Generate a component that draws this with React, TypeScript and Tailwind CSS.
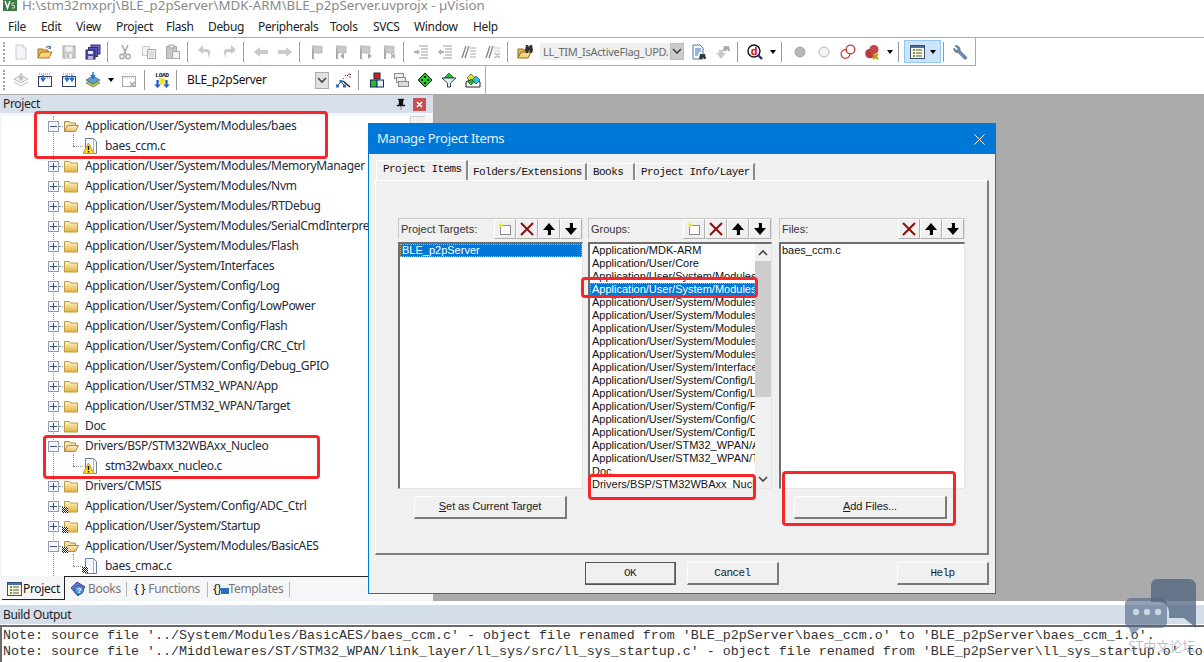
import React from "react";

type P = { children?: React.ReactNode; s?: number };
const Svg = ({ children, s = 16 }: P) => (
  <svg width={s} height={s} viewBox="0 0 16 16" className="block shrink-0">{children}</svg>
);

const G1 = "#c9c9c9";
const G2 = "#a9a9a9";

const NewFile = () => (<Svg><path d="M3 1h7l3 3v11H3z" fill="#f3f5fa" stroke="#c8ccd6" /><path d="M10 1v3h3" fill="#fff" stroke="#c8ccd6" /></Svg>);
const OpenF = () => (<Svg><path d="M1 14V5h5l1 1h4v2" fill="#e8b850" stroke="#a5772a" /><path d="M1 14l3-6h11l-3 6z" fill="#f7d67c" stroke="#a5772a" /><path d="M9 4c1-2 3-2 4-1" fill="none" stroke="#5b7fa8" strokeWidth="1.3" /><path d="M14 1v4h-3z" fill="#5b7fa8" /></Svg>);
const SaveD = () => (<Svg><rect x="2" y="2" width="12" height="12" fill={G1} stroke={G2} /><rect x="4.5" y="2.5" width="7" height="5" fill="#f2f2f2" /><rect x="5" y="10" width="6" height="4" fill="#eee" /><rect x="6" y="10.5" width="2" height="3" fill={G2} /></Svg>);
const SaveAll = () => (<Svg><rect x="6" y="1" width="9" height="9" fill="#6f6cc0" stroke="#2e2a78" /><rect x="3.5" y="3.5" width="9" height="9" fill="#5c58b2" stroke="#2e2a78" /><rect x="1" y="6" width="9" height="9" fill="#4d49a5" stroke="#2e2a78" /><rect x="3" y="7" width="5" height="3" fill="#e8e8f6" /><rect x="3" y="12" width="5" height="3" fill="#b9b8dc" /></Svg>);
const Cut = () => (<Svg><path d="M5 1l4 9M11 1l-4 9" stroke={G2} strokeWidth="1.6" fill="none" /><circle cx="5" cy="12.5" r="2.2" fill="none" stroke={G2} strokeWidth="1.4" /><circle cx="11" cy="12.5" r="2.2" fill="none" stroke={G2} strokeWidth="1.4" /></Svg>);
const Copy = () => (<Svg><path d="M1.5 2.5h7v9h-7z" fill="#f4f4f4" stroke={G1} /><path d="M6.5 5.5h8v9h-8z" fill="#eee" stroke={G2} /><path d="M8 8h5M8 10h5M8 12h5" stroke={G1} /></Svg>);
const Paste = () => (<Svg><rect x="1.5" y="2.5" width="10" height="12" fill={G1} stroke={G2} /><rect x="4" y="1" width="5" height="3" fill="#e6e6e6" stroke={G2} /><path d="M7.5 7.5h7v7h-7z" fill="#f2f2f2" stroke={G2} /></Svg>);
const Undo = ({ flip }: { flip?: boolean }) => (<Svg><g transform={flip ? "translate(16,0) scale(-1,1)" : undefined}><path d="M5 5h5c3 0 3.5 3 3 5l-2 4c0-3 1-6-2-6H5z" fill={G1} /><path d="M6 1v9L1 6z" fill={G1} /></g></Svg>);
const Arrow = ({ flip }: { flip?: boolean }) => (<Svg><g transform={flip ? "translate(16,0) scale(-1,1)" : undefined}><path d="M1 8l6-5v3h8v4H7v3z" fill={G1} /></g></Svg>);
const Flag = ({ mark }: { mark?: string }) => (<Svg><path d="M3 15V2h2v13z" fill={G2} /><path d="M3 2c3-1 5 1 10 0v7c-4 1-6-1-8 0z" fill={G1} stroke={G2} strokeWidth=".6" />{mark === "l" && <path d="M7 12l4-3v6z" fill={G2} />}{mark === "r" && <path d="M15 12l-4-3v6z" fill={G2} />}{mark === "x" && <path d="M10 10l4 4m0-4l-4 4" stroke={G2} strokeWidth="1.5" />}</Svg>);
const Indent = ({ dir }: { dir: number }) => (<Svg><path d="M6 2h9M8 5h7M8 8h7M8 11h7M6 14h9" stroke="#9a9a9a" /><path d={dir > 0 ? "M1 7h3V5l3 3-3 3V9H1z" : "M7 7H4V5L1 8l3 3V9h3z"} fill="#9db0c4" /></Svg>);
const Comment = ({ x }: { x?: boolean }) => (<Svg><path d="M1 14L5 2M4 14L8 2" stroke="#8a8a8a" strokeWidth="1.4" /><path d="M9 4h6M9 7h6M9 10h6M9 13h6" stroke={x ? G1 : "#aaa"} />{x && <path d="M10 9l5 5m0-5l-5 5" stroke={G2} />}</Svg>);
const Binoc = () => (<Svg><path d="M1 14V5h5l1 1h4v2" fill="#e8b850" stroke="#8a6a24" /><path d="M1 14l3-6h10l-3 6z" fill="#f7d67c" stroke="#8a6a24" /><path d="M8 6l1-5h2l1 2 1-2h2l1 5-1 3h-2l-1-3-1 3H9z" fill="#333" /></Svg>);
const FindDoc = () => (<Svg><path d="M2 1h7l3 3v11H2z" fill="#fff" stroke="#4a74b4" /><path d="M4 5h6M4 7h6M4 9h4M4 11h3" stroke="#2d6cc0" /><path d="M8 15l1-5h2l.5 1 .5-1h2l1 5h-2l-1-2-1 2z" fill="#333" /></Svg>);
const FindD = () => (<Svg><path d="M1 9h3V6h4v3h3l-5 6z" fill={G1} /><path d="M8 7l1-5h2l.5 1 .5-1h2l1 5h-2l-1-2-1 2z" fill={G2} /></Svg>);
const DebugD = () => (<Svg><circle cx="7" cy="7" r="6" fill="#fff" stroke="#111" strokeWidth="1.4" /><text x="7" y="11" textAnchor="middle" fontSize="11" fontWeight="700" fontFamily="Liberation Sans" fill="#e00000">d</text><path d="M11 11l4 4" stroke="#1c2f80" strokeWidth="2.4" /></Svg>);
const Circle = ({ f, st }: { f: string; st: string }) => (<Svg><circle cx="8" cy="8" r="5" fill={f} stroke={st} /></Svg>);
const TwoC = () => (<Svg><circle cx="5.5" cy="10" r="4.3" fill="#fff" stroke="#c8342c" strokeWidth="1.3" /><circle cx="10.5" cy="5.5" r="4.3" fill="#fff" stroke="#c8342c" strokeWidth="1.3" /></Svg>);
const RedX = () => (<Svg><circle cx="6" cy="9.5" r="4.8" fill="#b83a3a" /><circle cx="10" cy="5.5" r="4.5" fill="#c24444" /><path d="M9 10l5 5m0-5l-5 5" stroke="#b59a1a" strokeWidth="2.2" /></Svg>);
const WinIcon = () => (<Svg><rect x=".5" y="1.5" width="14" height="13" fill="#fbf8dc" stroke="#3d4d70" /><rect x="1" y="2" width="13" height="2" fill="#4d6fa5" /><path d="M3 6h2M3 9h2M3 12h2" stroke="#3a7a2a" strokeWidth="1.4" /><path d="M6 6h6M6 9h6M6 12h6" stroke="#555" /></Svg>);
const Wrench = () => (<Svg><path d="M2 2l3 2v2l-2 .5L1 4c-.5 3 1.5 5 4 4.500l6.500 6.500c1 1 3-1 2-2L7 6.500C7.500 3.500 5 1 2 2z" fill="#6f8fb4" stroke="#3e5a7c" strokeWidth=".7" /></Svg>);
const Grid = ({ arrows, x }: { arrows: number; x?: boolean }) => (<Svg><rect x="1.500" y="4.500" width="13" height="10" fill="#fff" stroke={x ? G2 : "#333f66"} /><path d="M2 2h12M2 6h12" stroke={x ? G1 : "#6d7ea8"} strokeDasharray="1 1" />{arrows >= 1 && !x && <path d="M6 3v5M4 6l2 3 2-3" stroke="#1f6fd0" strokeWidth="1.4" fill="none" />}{arrows === 2 && <path d="M11 3v5M9 6l2 3 2-3" stroke="#1f6fd0" strokeWidth="1.4" fill="none" />}{x && <path d="M9 10l5 5m0-5l-5 5" stroke={G2} strokeWidth="1.4" />}</Svg>);
const Translate = () => (<Svg><path d="M1 7l7-4 7 4-7 4z" fill="#eee" stroke="#bbb" /><path d="M1 10l7 4 7-4" fill="none" stroke="#bbb" /><path d="M8 1v6M6 5l2 3 2-3" stroke="#bbb" fill="none" strokeWidth="1.4" /></Svg>);
const Batch = () => (<Svg><path d="M1 11l7 4 7-4-7-4z" fill="#b7c94a" stroke="#556" strokeWidth=".6" /><path d="M1 8l7 4 7-4-7-4z" fill="#62a0c8" stroke="#345" strokeWidth=".6" /><path d="M8 0v5M6 3l2 3 2-3" stroke="#1f6fd0" strokeWidth="1.4" fill="none" /></Svg>);
const Load = () => (<Svg s={18}><text x="8" y="5" textAnchor="middle" fontSize="5.500" fontWeight="700" fontFamily="Liberation Mono" fill="#111">LOAD</text><path d="M8 5l1 2 2-1-1 2 2 1-2 1 1 2-2-1-1 2-1-2-2 1 1-2-2-1 2-1-1-2 2 1z" fill="#f4e21c" /><path d="M3 8v4H1l3 3 3-3H5V8zM11 8v4H9l3 3 3-3h-2V8z" fill="#1e5fd0" /></Svg>);
const Wizard = () => (<Svg><path d="M7 9l7 6" stroke="#222" strokeWidth="1.500" /><path d="M5 10L2 13M5 10l3 3" stroke="#356ab8" /><rect x="3.500" y="8" width="3" height="3" fill="#356ab8" /><rect x="0" y="12.500" width="3" height="3" fill="#356ab8" /><rect x="7" y="12.500" width="3" height="3" fill="#356ab8" /><path d="M9 3l1 1M13 1v2M15 5h-2M7 6l1 1" stroke="#c03030" /><path d="M11 3l1 1M15 2l-1 1" stroke="#222" /></Svg>);
const Blocks = () => (<Svg><rect x="5" y="1" width="6" height="6" fill="#d41f1f" stroke="#1d2b5c" /><rect x="1.500" y="8" width="6.500" height="7" fill="#19c02a" stroke="#1d2b5c" /><rect x="8" y="8" width="6.500" height="7" fill="#e6ecf5" stroke="#1d2b5c" /></Svg>);
const Windows = () => (<Svg><rect x="1.500" y="1.500" width="9" height="5" fill="#eee" stroke="#888" /><rect x="3.500" y="5.500" width="9" height="5" fill="#eee" stroke="#888" /><rect x="5.500" y="9.500" width="10" height="5" fill="#ddd" stroke="#888" /></Svg>);
const Diamond = () => (<Svg><path d="M8 1l7 7-7 7-7-7z" fill="#1fd11f" stroke="#111" /><g fill="#111"><rect x="7" y="4" width="2" height="2" /><rect x="4" y="7" width="2" height="2" /><rect x="10" y="7" width="2" height="2" /><rect x="7" y="10" width="2" height="2" /></g></Svg>);
const Funnel = () => (<Svg><path d="M8 1l5 5H3z" fill="#19c02a" stroke="#222" strokeWidth=".6" /><path d="M1 6h14L9.500 11v4h-3v-4z" fill="#d9f3f7" stroke="#444" /></Svg>);
const Multi = () => (<Svg><path d="M1 10l7-4 7 4v5H1z" fill="#fff" stroke="#222" /><path d="M6 2l4 4-4 4-4-4z" fill="#e8e020" stroke="#222" strokeWidth=".6" /><path d="M11 4l4 4-4 4-4-4z" fill="#20c8e0" stroke="#222" strokeWidth=".6" /><path d="M6 7l3 3-3 3-3-3z" fill="#20c020" stroke="#222" strokeWidth=".6" /></Svg>);

const Btn = ({ children }: { children: React.ReactNode }) => (
  <div className="w-6 h-full flex items-center justify-center shrink-0">{children}</div>
);
const Sep = () => (
  <div className="w-2 h-full flex shrink-0 items-center pl-[2px]"><div className="w-px h-5 bg-[#9a9a9a]" /></div>
);
const Caret = () => (
  <div className="w-[12px] h-full flex items-center justify-center shrink-0"><div className="w-0 h-0 border-x-[3.5px] border-x-transparent border-t-[4px] border-t-black" /></div>
);
const Grip = () => (
  <div className="w-[9px] h-full shrink-0 flex items-center pl-[3px]"><div className="w-[2px] h-[20px] border-l-2 border-dotted border-[#a0a0a0]" /></div>
);
const Chevron = ({ up }: { up?: boolean }) => (
  <svg width="10" height="7" viewBox="0 0 10 7" className="block"><path d={up ? "M1 6l4-4 4 4" : "M1 1l4 4 4-4"} fill="none" stroke="#444" strokeWidth="1.6" /></svg>
);

const menu: [string, number][] = [["File", 33], ["Edit", 35], ["View", 40], ["Project", 50], ["Flash", 42], ["Debug", 50], ["Peripherals", 72], ["Tools", 43], ["SVCS", 41], ["Window", 59], ["Help", 30]];

const Minus = ({ plus }: { plus?: boolean }) => (
  <div className="w-[11px] h-[11px] border border-[#8f9db0] bg-[#f4f6f9] flex items-center justify-center relative shrink-0">
    <div className="w-[7px] h-px bg-[#3c5070]" />
    {plus && <div className="absolute w-px h-[7px] bg-[#3c5070]" />}
  </div>
);
const Lock = () => (
  <svg width="6" height="6" viewBox="0 0 6 6" className="absolute -left-px bottom-px"><path d="M0 0h6v6H0z" fill="#fff" /><path d="M0 0h1v1H0zM2 0h1v1H2zM4 0h1v1H4zM1 1h1v1H1zM3 1h1v1H3zM5 1h1v1H5zM0 2h1v1H0zM2 2h1v1H2zM4 2h1v1H4zM1 3h1v1H1zM3 3h1v1H3zM5 3h1v1H5zM0 4h1v1H0zM2 4h1v1H2zM4 4h1v1H4zM1 5h1v1H1zM3 5h1v1H3zM5 5h1v1H5z" fill="#111" /></svg>
);
const FolderIcon = ({ open, lock }: { open?: boolean; lock?: boolean }) => (
  <div className="relative w-[16px] h-[16px] shrink-0">
    <svg width="16" height="16" viewBox="0 0 16 16" className="block">
      <defs>
        <linearGradient id="fg" x1="0" y1="0" x2="0" y2="1"><stop offset="0" stopColor="#fff6cc" /><stop offset="1" stopColor="#e3b23a" /></linearGradient>
        <linearGradient id="fo" x1="0" y1="0" x2="0" y2="1"><stop offset="0" stopColor="#fbedc4" /><stop offset="1" stopColor="#e8bf66" /></linearGradient>
      </defs>
      {open ? (
        <>
          <path d="M1.500 13.500v-10h5l1 1.500h5v2" fill="#f4e3b2" stroke="#b08a48" />
          <path d="M1.500 13.500l3-6h11l-3 6z" fill="url(#fo)" stroke="#b08a48" />
        </>
      ) : (
        <>
          <path d="M1.500 3.500h5l1 1.500h7v9h-13z" fill="url(#fg)" stroke="#c09a44" />
        </>
      )}
    </svg>
    {lock && <Lock />}
  </div>
);
const FileIcon = ({ warn, lock }: { warn?: boolean; lock?: boolean }) => (
  <div className="relative w-[16px] h-[16px] shrink-0">
    <svg width="16" height="16" viewBox="0 0 16 16" className="block">
      <path d="M2.500 .5h8l3 3v12h-11z" fill="#f4f7fc" stroke="#6f7f9c" />
      <path d="M10.500 1v14" stroke="#a6b6d4" />
      {warn && (
        <>
          <path d="M5.500 5L11 15.500H0z" fill="#fbd82a" stroke="#c8a010" />
          <path d="M5.500 8v4M5.500 13v1.500" stroke="#111" strokeWidth="1.400" />
        </>
      )}
    </svg>
    {lock && <Lock />}
  </div>
);

type Row = { t: string; k: "c" | "o" | "f"; warn?: boolean; lock?: boolean };
const U = "Application/User/";
const tree: Row[] = [
  { t: U + "System/Modules/baes", k: "o" },
  { t: "baes_ccm.c", k: "f", warn: true },
  { t: U + "System/Modules/MemoryManager", k: "c" },
  { t: U + "System/Modules/Nvm", k: "c" },
  { t: U + "System/Modules/RTDebug", k: "c" },
  { t: U + "System/Modules/SerialCmdInterpreter", k: "c" },
  { t: U + "System/Modules/Flash", k: "c" },
  { t: U + "System/Interfaces", k: "c" },
  { t: U + "System/Config/Log", k: "c" },
  { t: U + "System/Config/LowPower", k: "c" },
  { t: U + "System/Config/Flash", k: "c" },
  { t: U + "System/Config/CRC_Ctrl", k: "c" },
  { t: U + "System/Config/Debug_GPIO", k: "c" },
  { t: U + "STM32_WPAN/App", k: "c" },
  { t: U + "STM32_WPAN/Target", k: "c" },
  { t: "Doc", k: "c" },
  { t: "Drivers/BSP/STM32WBAxx_Nucleo", k: "o" },
  { t: "stm32wbaxx_nucleo.c", k: "f", warn: true },
  { t: "Drivers/CMSIS", k: "c" },
  { t: U + "System/Config/ADC_Ctrl", k: "c", lock: true },
  { t: U + "System/Startup", k: "c", lock: true },
  { t: U + "System/Modules/BasicAES", k: "o", lock: true },
  { t: "baes_cmac.c", k: "f", lock: true },
];

const TreeRow = ({ r }: { r: Row }) =>
  r.k === "f" ? (
    <div className="h-5 flex items-center relative">
      <div className="absolute left-[73px] top-[-2px] h-3 border-l border-dotted border-[#909090]" />
      <div className="w-[73px] shrink-0" />
      <div className="w-[10px] border-t border-dotted border-[#909090] shrink-0" />
      <FileIcon warn={r.warn} lock={r.lock} />
      <span className="ml-[6px]">{r.t}</span>
    </div>
  ) : (
    <div className="h-5 flex items-center">
      <div className="w-[48px] shrink-0" />
      <Minus plus={r.k === "c"} />
      <div className="w-[4px] border-t border-dotted border-[#909090] shrink-0" />
      <FolderIcon open={r.k === "o"} lock={r.lock} />
      <span className="ml-[6px] whitespace-nowrap">{r.t}</span>
    </div>
  );

const StarNew = () => (
  <svg width="16" height="16" viewBox="0 0 16 16" className="block"><rect x="3.500" y="4.500" width="10" height="9" fill="#fff" stroke="#222" strokeDasharray="1 1" /><path d="M4 1l1 2 2 1-2 1-1 2-1-2-2-1 2-1z" fill="#f2e83a" /></svg>
);
const RedCross = () => (
  <svg width="16" height="16" viewBox="0 0 16 16" className="block"><path d="M2 2l12 12M14 2L2 14" stroke="#8a0f0f" strokeWidth="2" /></svg>
);
const UpA = ({ down }: { down?: boolean }) => (
  <svg width="14" height="14" viewBox="0 0 14 14" className="block"><g transform={down ? "translate(0,14) scale(1,-1)" : undefined}><path d="M7 1l6 7H9v5H5.500c1-2 .5-3.500 0-5H1z" fill="#000" /></g></svg>
);
const Cell = ({ children }: { children: React.ReactNode }) => (
  <div className="w-[22px] h-full flex items-center justify-center border-t border-l border-white border-r border-r-[#b0b0b0] border-b border-b-[#b0b0b0] bg-[#f0f0f0] shrink-0">{children}</div>
);
const Bevel = ({ w, children, extra }: { w: string; children: React.ReactNode; extra?: string }) => (
  <div className={`${w} ${extra ?? ""} h-[23px] flex items-center justify-center bg-[#f0f0f0] border-t border-l border-t-[#fdfdfd] border-l-[#fdfdfd] border-r-2 border-b-2 border-r-[#7a7a7a] border-b-[#7a7a7a] text-[#1a1a1a] shrink-0`}>{children}</div>
);

const ColHead = ({ label, add }: { label: string; add?: boolean }) => (
  <div className="h-[21px] flex items-center border-t border-l border-[#c8c8c8] border-r border-r-[#e0e0e0] pl-[2px]">
    <span className="flex-1 text-[#333] whitespace-nowrap">{label}</span>
    {add && <Cell><StarNew /></Cell>}
    <Cell><RedCross /></Cell>
    <Cell><UpA /></Cell>
    <Cell><UpA down /></Cell>
  </div>
);
const listBox = "h-[247px] mt-[3px] bg-white border-t-2 border-l-2 border-t-[#6e6e6e] border-l-[#6e6e6e] border-r border-b border-r-[#e4e4e4] border-b-[#e4e4e4] overflow-hidden";

const M = U + "System/Modules";
const C = U + "System/Config/";
const groups = [
  "Application/MDK-ARM", U + "Core", M, M, M, M, M, M, M, U + "System/Interfaces", C + "Log", C + "LowPower", C + "Flash", C + "CRC_Ctrl", C + "Debug_GPIO", U + "STM32_WPAN/App", U + "STM32_WPAN/Target", "Doc", "Drivers/BSP/STM32WBAxx_Nucleo",
];

const Anno = ({ c }: { c: string }) => (
  <div className={`absolute border-[3px] border-[#f8262a] rounded-[4px] pointer-events-none ${c}`} />
);

const mono = "font-['Liberation_Mono',monospace] text-[11px] tracking-[-0.55px]";

function Dialog() {
  return (
    <div className="absolute left-[368px] top-[123px] w-[628px] h-[471px] border border-[#0078d7] bg-[#f0f0f0] flex flex-col">
      <div className="h-[30px] bg-[#0078d7] flex items-center justify-between pl-[8px] pr-[10px] shrink-0">
        <span className="font-['Noto_Sans',sans-serif] text-[13px] text-[#e6f1fa]">Manage Project Items</span>
        <svg width="11" height="11" viewBox="0 0 11 11" className="block"><path d="M.5.5l10 10m0-10l-10 10" stroke="#fff" /></svg>
      </div>
      <div className="flex flex-col px-[6px] pt-[6px] font-['Liberation_Sans',sans-serif] text-[11px] tracking-normal">
        <div className={`flex items-end h-[20px] pl-px ${mono}`}>
          <div className="w-[92px] h-[20px] pb-[2px] pl-[6px] flex items-center border-t border-l border-white border-r-2 border-r-[#8a8a8a] bg-[#f0f0f0] text-[#111]">Project Items</div>
          <div className="w-[119px] h-[17px] flex items-center pl-[4px] border-t border-l border-white border-r-2 border-r-[#8a8a8a] text-[#111]">Folders/Extensions</div>
          <div className="w-[48px] h-[17px] flex items-center pl-[5px] border-t border-l border-white border-r-2 border-r-[#8a8a8a] text-[#111]">Books</div>
          <div className="w-[120px] h-[17px] flex items-center pl-[5px] border-t border-l border-white border-r-2 border-r-[#8a8a8a] text-[#111]">Project Info/Layer</div>
        </div>
        <div className="h-[375px] border-t border-l border-white border-r-2 border-b-2 border-r-[#7f7f7f] border-b-[#7f7f7f] pt-[37px] pl-[22px] flex items-start">
          <div className="w-[185px] flex flex-col">
            <ColHead label="Project Targets:" add />
            <div className={listBox}>
              <div className="h-[13px] bg-[#0078d7] text-white pl-[1px] leading-[11px] border border-dotted border-[#d8a868]">BLE_p2pServer</div>
            </div>
            <Bevel w="w-[153px]" extra="mt-[7px] ml-[16px]"><span className="-mt-px tracking-[-0.1px]"><u>S</u>et as Current Target</span></Bevel>
          </div>
          <div className="w-[184px] ml-[5px] flex flex-col">
            <ColHead label="Groups:" add />
            <div className={`${listBox} flex`}>
              <div className="flex-1 min-w-0 overflow-hidden">
                {groups.map((g, i) => (
                  <div key={i} className={i === 3 ? "h-[13px] leading-[11px] pl-px whitespace-nowrap overflow-hidden bg-[#0078d7] text-white border border-dotted border-[#d8a868]" : "h-[13px] leading-[13px] pl-[2px] whitespace-nowrap overflow-hidden text-[#111]"}>{g}</div>
                ))}
              </div>
              <div className="w-[16px] shrink-0 flex flex-col bg-[#f0f0f0]">
                <div className="h-[17px] flex items-center justify-center"><Chevron up /></div>
                <div className="h-[136px] bg-[#cdcdcd]" />
                <div className="flex-1" />
                <div className="h-[17px] flex items-center justify-center"><Chevron /></div>
              </div>
            </div>
          </div>
          <div className="w-[186px] ml-[7px] flex flex-col">
            <ColHead label="Files:" />
            <div className={listBox}>
              <div className="h-[13px] leading-[13px] pl-[1px] text-[#111]">baes_ccm.c</div>
            </div>
            <Bevel w="w-[153px]" extra="mt-[7px] ml-[15px]"><span className="-mt-px tracking-[-0.1px]"><u>A</u>dd Files...</span></Bevel>
          </div>
        </div>
        <div className={`flex mt-[7px] pl-[210px] ${mono}`}>
          <Bevel w="w-[91px]" extra="outline outline-1 outline-[#555] -outline-offset-1">OK</Bevel>
          <Bevel w="w-[92px]" extra="ml-[11px]">Cancel</Bevel>
          <Bevel w="w-[92px]" extra="ml-[118px]">Help</Bevel>
        </div>
      </div>
    </div>
  );
}

const Watermark = () => (
  <div className="absolute left-[1122px] top-[576px] w-[80px] h-[86px] pointer-events-none">
    <svg width="80" height="62" viewBox="0 0 80 62" className="block">
      <path d="M35 3h32c4 0 7 3 7 7v42l-12-10H47v-6c0-6-5-10-10-10H29V10c0-4 3-7 6-7z" fill="#4a5f7c" fillOpacity=".72" />
      <path d="M9 22h30c3 0 6 3 6 6v18c0 3-3 6-6 6H18l-8 8-3-8c-2 0-4-3-4-6V28c0-3 3-6 6-6z" fill="#4e6685" fillOpacity=".62" />
      <circle cx="14" cy="36" r="3.200" fill="#fff" fillOpacity=".6" />
      <circle cx="25" cy="36" r="3.200" fill="#fff" fillOpacity=".6" />
      <circle cx="36" cy="36" r="3.200" fill="#fff" fillOpacity=".6" />
    </svg>
    <div className="font-['Noto_Sans_CJK_SC',sans-serif] text-[13px] tracking-normal leading-[16px] text-[#8a94a4]/60 pl-[6px] whitespace-nowrap">ST中文论坛</div>
  </div>
);

export default function App() {
  return (
    <div className="relative w-[1204px] h-[662px] overflow-hidden bg-white flex flex-col font-['Noto_Sans',sans-serif] text-[12px] tracking-[-0.33px] text-[#1a1a1a]">
      <div className="h-[17px] flex items-start pl-[3px] overflow-hidden shrink-0">
        <svg width="14" height="11" viewBox="0 0 14 11" className="block shrink-0"><rect width="14" height="11" fill="#3a7d44" /><path d="M2 1l2.500 7L7 1" fill="none" stroke="#fff" strokeWidth="1.500" /><path d="M11.500 3H9v2.500h2.500V8H9" fill="none" stroke="#cfd8d0" /></svg>
        <span className="ml-[5px] text-[13.3px] tracking-normal leading-[10px] text-[#8a8a8a] whitespace-nowrap">H:\stm32mxprj\BLE_p2pServer\MDK-ARM\BLE_p2pServer.uvprojx - µVision</span>
      </div>
      <div className="h-[21px] flex items-center pl-[8px] border-b border-[#ababab] shrink-0">
        {menu.map(([m, w]) => (
          <span key={m} style={{ width: w }} className="shrink-0 text-[#222]">{m}</span>
        ))}
      </div>
      <div className="h-[28px] w-[976px] flex items-center border-b border-r border-[#ababab] shrink-0">
        <Grip />
        <Btn><NewFile /></Btn><Btn><OpenF /></Btn><Btn><SaveD /></Btn><Btn><SaveAll /></Btn>
        <Sep />
        <Btn><Cut /></Btn><Btn><Copy /></Btn><Btn><Paste /></Btn>
        <Sep />
        <Btn><Undo /></Btn><Btn><Undo flip /></Btn>
        <Sep />
        <Btn><Arrow /></Btn><Btn><Arrow flip /></Btn>
        <Sep />
        <Btn><Flag /></Btn><Btn><Flag mark="l" /></Btn><Btn><Flag mark="r" /></Btn><Btn><Flag mark="x" /></Btn>
        <Sep />
        <Btn><Indent dir={1} /></Btn><Btn><Indent dir={-1} /></Btn><Btn><Comment /></Btn><Btn><Comment x /></Btn>
        <Sep />
        <Btn><Binoc /></Btn>
        <div className="ml-[3px] w-[144px] h-[17px] flex shrink-0 bg-[#f0f0f0]">
          <span className="w-[130px] pl-[3px] text-[11px] tracking-[-0.3px] leading-[17px] text-[#6a6a6a] whitespace-nowrap">LL_TIM_IsActiveFlag_UPD.</span>
          <div className="w-[14px] bg-[#cccccc] border border-[#bdbdbd] flex items-center justify-center"><Chevron /></div>
        </div>
        <div className="ml-[3px] flex h-full"><Btn><FindDoc /></Btn><Btn><FindD /></Btn></div>
        <Sep />
        <Btn><DebugD /></Btn><Caret />
        <Sep />
        <div className="ml-px flex h-full">
          <Btn><Circle f="#b8b8b8" st="#a8a8a8" /></Btn><Btn><Circle f="#f4f4f4" st="#b5b5b5" /></Btn><Btn><TwoC /></Btn><Btn><RedX /></Btn>
        </div>
        <Caret />
        <Sep />
        <div className="w-[37px] h-[23px] flex items-center pl-[5px] gap-[4px] bg-[#cce4f7] border border-[#90c8f6] shrink-0">
          <WinIcon />
          <div className="w-0 h-0 border-x-[3.5px] border-x-transparent border-t-[4px] border-t-black" />
        </div>
        <Sep />
        <Btn><Wrench /></Btn>
      </div>
      <div className="h-[28px] w-[486px] flex items-center border-r border-[#ababab] shrink-0">
        <Grip />
        <Btn><Translate /></Btn><Btn><Grid arrows={1} /></Btn><Btn><Grid arrows={2} /></Btn><Btn><Batch /></Btn><Caret />
        <Btn><Grid arrows={0} x /></Btn>
        <div className="ml-px flex h-full"><Sep /></div>
        <Btn><Load /></Btn>
        <Sep />
        <div className="w-[150px] h-full flex items-center pl-[5px] pr-[3px] shrink-0">
          <span className="flex-1 text-[#111]">BLE_p2pServer</span>
          <div className="w-[14px] h-[17px] bg-[#e1e1e1] border border-[#adadad] flex items-center justify-center"><Chevron /></div>
        </div>
        <Btn><Wizard /></Btn>
        <Sep />
        <div className="ml-[1px] flex h-full">
          <Btn><Blocks /></Btn><Btn><Windows /></Btn><Btn><Diamond /></Btn><Btn><Funnel /></Btn><Btn><Multi /></Btn>
        </div>
      </div>
      <div className="h-[507px] bg-[#ababab] pt-px flex shrink-0">
        <div className="w-[433px] bg-[#f5f6f7] flex flex-col">
          <div className="h-[18px] bg-[#d6dfea] flex items-center pl-[3px] pr-[7px] shrink-0">
            <span className="flex-1 text-[#222]">Project</span>
            <svg width="10" height="12" viewBox="0 0 10 12" className="block mr-[7px]"><path d="M2 1h6v1H7v5h2v1H1V7h2V2H2zM5 8v4" fill="#111" stroke="#111" strokeWidth=".4" /></svg>
            <div className="w-[13px] h-[13px] bg-[#c75050] flex items-center justify-center">
              <svg width="7" height="7" viewBox="0 0 7 7" className="block"><path d="M1 1l5 5m0-5L1 6" stroke="#fff" strokeWidth="1.500" /></svg>
            </div>
          </div>
          <div className="h-[460px] mt-[3px] ml-[2px] w-[423px] bg-white relative overflow-hidden shrink-0 text-[#1f2a38]">
            <div className="absolute left-[51px] top-0 h-full border-l border-dotted border-[#909090]" />
            <div className="absolute left-[408px] top-0 w-[15px] h-full bg-[#f0f0f0] border-l border-t border-[#d0d0d0]" />
            <div className="relative -ml-[2px]">
              {tree.map((r, i) => <TreeRow key={i} r={r} />)}
            </div>
          </div>
          <div className="flex-1 flex items-start text-[#777]">
            <div className="ml-[2px] w-[63px] h-[24px] flex items-center pt-[2px] pl-[5px] border-r border-b border-[#222] text-[#111]">
              <WinIcon /><span>Project</span>
            </div>
            <div className="flex-1 h-[23px] pt-[2px] border-t border-[#222] flex items-center">
              <div className="w-[61px] pl-[5px] flex items-center gap-[2px] h-[17px]">
                <svg width="16" height="16" viewBox="0 0 16 16" className="block shrink-0"><path d="M1 7l6-6 8 5-7 9z" fill="#7a74c8" stroke="#453f92" /><circle cx="9" cy="9" r="4.500" fill="#4f97e0" stroke="#235a9e" /><text x="9" y="12" textAnchor="middle" fontSize="8" fontWeight="700" fontFamily="Liberation Sans" fill="#fff">?</text></svg>
                <span>Books</span>
              </div>
              <div className="w-px h-[15px] bg-[#b5b5b5]" />
              <div className="w-[80px] pl-[7px] flex items-center gap-[3px]"><span className="text-[#111]">{"{ }"}</span><span>Functions</span></div>
              <div className="w-px h-[15px] bg-[#b5b5b5]" />
              <div className="w-[81px] pl-[5px] flex items-center gap-[3px]">
                <span className="text-[#111] relative">{"{}"}<span className="absolute left-[8px] top-[8px] w-[8px] h-[6px] bg-[#2d6cc0]" /></span>
                <span className="ml-[4px]">Templates</span>
              </div>
              <div className="w-px h-[15px] bg-[#b5b5b5]" />
            </div>
          </div>
        </div>
        <div className="flex-1" />
      </div>
      <div className="h-[4px] shrink-0" />
      <div className="h-[19px] bg-[#d5dfeb] flex items-center pl-[3px] shrink-0 text-[#222]">Build Output</div>
      <div className="h-px shrink-0" />
      <div className="flex-1 border-t-2 border-l-2 border-t-[#6b6b6b] border-l-[#6b6b6b] pl-px font-['Liberation_Mono',monospace] text-[13.33px] tracking-normal leading-[16px] text-[#333] whitespace-pre overflow-hidden">
        <div className="pt-px">Note: source file '../System/Modules/BasicAES/baes_ccm.c' - object file renamed from 'BLE_p2pServer\baes_ccm.o' to 'BLE_p2pServer\baes_ccm_1.o'.</div>
        <div>Note: source file '../Middlewares/ST/STM32_WPAN/link_layer/ll_sys/src/ll_sys_startup.c' - object file renamed from 'BLE_p2pServer\ll_sys_startup.o' to</div>
      </div>
      <Dialog />
      <Anno c="left-[34px] top-[111px] w-[294px] h-[48px]" />
      <Anno c="left-[43px] top-[435px] w-[277px] h-[44px]" />
      <Anno c="left-[581px] top-[277px] w-[177px] h-[21px]" />
      <Anno c="left-[588px] top-[474px] w-[168px] h-[26px]" />
      <Anno c="left-[782px] top-[471px] w-[174px] h-[55px]" />
      <Watermark />
    </div>
  );
}
